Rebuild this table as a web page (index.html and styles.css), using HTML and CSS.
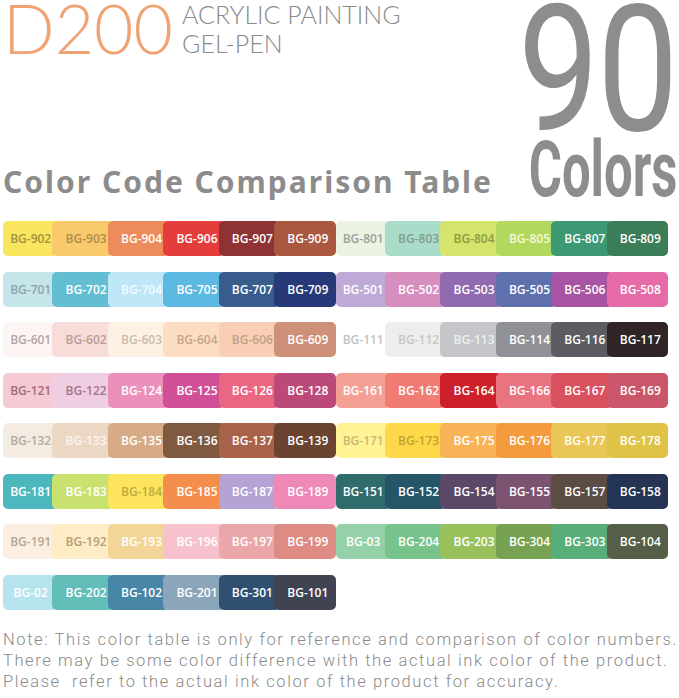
FILE: index.html
```html
<!DOCTYPE html>
<html>
<head>
<meta charset="utf-8">
<link rel="stylesheet" href="styles.css">
</head>
<body>
<div class="page">
  <header class="top">
    <div class="left">
      <div class="brand">
        <span class="model">D200</span>
        <div class="sub"><span>ACRYLIC PAINTING</span><span>GEL-PEN</span></div>
      </div>
      <h1 class="title">Color Code Comparison Table</h1>
    </div>
    <div class="right">
      <div class="num">90</div>
      <div class="colors">Colors</div>
    </div>
  </header>

  <section class="table">
    <div class="row">
      <div class="grp">
        <div class="sw dk" style="background:#f9e55e;color:#a4933e">BG-902</div>
        <div class="sw dk" style="background:#f8ca6c;color:#ad8d4c">BG-903</div>
        <div class="sw" style="background:#ee8b5a">BG-904</div>
        <div class="sw" style="background:#e53d3b">BG-906</div>
        <div class="sw" style="background:#8e3233">BG-907</div>
        <div class="sw" style="background:#aa5840">BG-909</div>
      </div>
      <div class="grp">
        <div class="sw dk" style="background:#ebf3e3;color:#9aa39a">BG-801</div>
        <div class="sw dk" style="background:#aadcca;color:#7f9f8f">BG-803</div>
        <div class="sw dk" style="background:#d4e46c;color:#8e9b42">BG-804</div>
        <div class="sw" style="background:#b2d95d;color:#f4f8d8">BG-805</div>
        <div class="sw" style="background:#3d9974">BG-807</div>
        <div class="sw" style="background:#3b7d57">BG-809</div>
      </div>
    </div>
    <div class="row">
      <div class="grp">
        <div class="sw dk" style="background:#c5e5eb;color:#8ea4a8">BG-701</div>
        <div class="sw" style="background:#63bed1">BG-702</div>
        <div class="sw" style="background:#bee7f8;color:#f4fbff">BG-704</div>
        <div class="sw" style="background:#5bb9e2">BG-705</div>
        <div class="sw" style="background:#385d8d">BG-707</div>
        <div class="sw" style="background:#273978">BG-709</div>
      </div>
      <div class="grp">
        <div class="sw" style="background:#bfa9d7">BG-501</div>
        <div class="sw" style="background:#d58ebe">BG-502</div>
        <div class="sw" style="background:#906baf">BG-503</div>
        <div class="sw" style="background:#606fad">BG-505</div>
        <div class="sw" style="background:#a853a3">BG-506</div>
        <div class="sw" style="background:#e66ca8">BG-508</div>
      </div>
    </div>
    <div class="row">
      <div class="grp">
        <div class="sw dk" style="background:#fdf4f4;color:#b3a6a6">BG-601</div>
        <div class="sw dk" style="background:#f8dcd9;color:#b89f9c">BG-602</div>
        <div class="sw dk" style="background:#fdf1e3;color:#cbbcab">BG-603</div>
        <div class="sw dk" style="background:#fcddc1;color:#c5a68a">BG-604</div>
        <div class="sw dk" style="background:#f8cfb5;color:#c59f86">BG-606</div>
        <div class="sw" style="background:#ce9078">BG-609</div>
      </div>
      <div class="grp">
        <div class="sw dk" style="background:#ffffff;color:#c2c2c2">BG-111</div>
        <div class="sw dk" style="background:#ededed;color:#c6c6c6">BG-112</div>
        <div class="sw" style="background:#c4c6c9;color:#eceef0">BG-113</div>
        <div class="sw" style="background:#8f9197">BG-114</div>
        <div class="sw" style="background:#5b5d62">BG-116</div>
        <div class="sw" style="background:#2f2527">BG-117</div>
      </div>
    </div>
    <div class="row">
      <div class="grp">
        <div class="sw dk" style="background:#f5cad3;color:#a56a7a">BG-121</div>
        <div class="sw dk" style="background:#f0cee1;color:#a37390">BG-122</div>
        <div class="sw" style="background:#eb90ba">BG-124</div>
        <div class="sw" style="background:#d14f97">BG-125</div>
        <div class="sw" style="background:#e96780">BG-126</div>
        <div class="sw" style="background:#bc4a79">BG-128</div>
      </div>
      <div class="grp">
        <div class="sw" style="background:#f4a095">BG-161</div>
        <div class="sw" style="background:#f07c73">BG-162</div>
        <div class="sw" style="background:#cd202a">BG-164</div>
        <div class="sw" style="background:#e97480">BG-166</div>
        <div class="sw" style="background:#d9505f">BG-167</div>
        <div class="sw" style="background:#c95669">BG-169</div>
      </div>
    </div>
    <div class="row">
      <div class="grp">
        <div class="sw dk" style="background:#f4ece2;color:#b3aba2">BG-132</div>
        <div class="sw" style="background:#ecd7c5;color:#fbf4ee">BG-133</div>
        <div class="sw" style="background:#d8ab87">BG-135</div>
        <div class="sw" style="background:#805941">BG-136</div>
        <div class="sw" style="background:#a9624a">BG-137</div>
        <div class="sw" style="background:#6b4431">BG-139</div>
      </div>
      <div class="grp">
        <div class="sw dk" style="background:#fff394;color:#c9ba72">BG-171</div>
        <div class="sw dk" style="background:#fdd849;color:#c2a232">BG-173</div>
        <div class="sw" style="background:#f7b356">BG-175</div>
        <div class="sw" style="background:#f49b3e">BG-176</div>
        <div class="sw" style="background:#e9c655">BG-177</div>
        <div class="sw" style="background:#dec346">BG-178</div>
      </div>
    </div>
    <div class="row">
      <div class="grp">
        <div class="sw" style="background:#4cb8bd">BG-181</div>
        <div class="sw" style="background:#c9e16f">BG-183</div>
        <div class="sw dk" style="background:#fce55d;color:#c2aa42">BG-184</div>
        <div class="sw" style="background:#f58d4d">BG-185</div>
        <div class="sw" style="background:#b5a3d5">BG-187</div>
        <div class="sw" style="background:#ee89b7">BG-189</div>
      </div>
      <div class="grp">
        <div class="sw" style="background:#2f6c6b">BG-151</div>
        <div class="sw" style="background:#245667">BG-152</div>
        <div class="sw" style="background:#5b4768">BG-154</div>
        <div class="sw" style="background:#7b5371">BG-155</div>
        <div class="sw" style="background:#5b4d44">BG-157</div>
        <div class="sw" style="background:#233454">BG-158</div>
      </div>
    </div>
    <div class="row">
      <div class="grp">
        <div class="sw dk" style="background:#fcefe1;color:#b5a595">BG-191</div>
        <div class="sw dk" style="background:#fdecc5;color:#b59f75">BG-192</div>
        <div class="sw" style="background:#f3d597">BG-193</div>
        <div class="sw" style="background:#f8c1ce">BG-196</div>
        <div class="sw" style="background:#eaa6a8">BG-197</div>
        <div class="sw" style="background:#de8b83">BG-199</div>
      </div>
      <div class="grp">
        <div class="sw" style="background:#94d1a9">BG-03</div>
        <div class="sw" style="background:#78c28b">BG-204</div>
        <div class="sw" style="background:#99c15b">BG-203</div>
        <div class="sw" style="background:#77a251">BG-304</div>
        <div class="sw" style="background:#58ae79">BG-303</div>
        <div class="sw" style="background:#555e46">BG-104</div>
      </div>
    </div>
    <div class="row">
      <div class="grp">
        <div class="sw" style="background:#b7e3ef">BG-02</div>
        <div class="sw" style="background:#63beb9">BG-202</div>
        <div class="sw" style="background:#4786a7">BG-102</div>
        <div class="sw" style="background:#8ba6bb">BG-201</div>
        <div class="sw" style="background:#304f71">BG-301</div>
        <div class="sw" style="background:#404351">BG-101</div>
      </div>
      <div class="grp"></div>
    </div>
  </section>

  <p class="note">Note: This color table is only for reference and comparison of color numbers.<br>There may be some color difference with the actual ink color of the product.<br>Please&nbsp; refer to the actual ink color of the product for accuracy.</p>
</div>
</body>
</html>
```

FILE: styles.css
```css
* { box-sizing: border-box; }
html, body { margin: 0; padding: 0; background: #ffffff; }
.page {
  width: 679px;
  padding: 0 11px 0 3px;
  font-family: "Noto Sans", "DejaVu Sans", sans-serif;
}
.top {
  display: flex;
  justify-content: space-between;
  height: 221px;
}
.left {
  display: flex;
  flex-direction: column;
  flex: 1 1 auto;
  min-width: 0;
}
.brand {
  display: flex;
  align-items: flex-start;
  gap: 9px;
}
.model {
  font-family: "Lato", sans-serif;
  font-weight: 300;
  font-size: 68px;
  line-height: 56px;
  color: #f0a272;
}
.sub {
  display: flex;
  flex-direction: column;
  font-family: "Lato", sans-serif;
  font-weight: 300;
  font-size: 25px;
  line-height: 29px;
  color: #8a8a8a;
  letter-spacing: 0;
}
.title {
  margin: 105px 0 0 0;
  font-family: "Noto Sans", sans-serif;
  font-weight: 700;
  font-size: 30px;
  line-height: 38px;
  letter-spacing: 2px;
  color: #8c8c8c;
  white-space: nowrap;
}
.right {
  display: flex;
  flex-direction: column;
  align-items: flex-end;
  margin-right: -9px;
  flex: 0 0 auto;
}
.num {
  font-family: "Roboto", sans-serif;
  font-weight: 400;
  font-size: 176px;
  line-height: 140px;
  color: #8d8d8d;
  transform: scaleX(0.82);
  transform-origin: right top;
  letter-spacing: -2px;
}
.colors {
  font-family: "Roboto", sans-serif;
  font-weight: 700;
  font-size: 77px;
  line-height: 60px;
  color: #8d8d8d;
  transform: scaleX(0.66);
  transform-origin: right top;
}
.table {
  display: flex;
  flex-direction: column;
  gap: 15.5px;
  width: 665px;
}
.row {
  display: grid;
  grid-template-columns: 1fr 1fr;
  height: 35px;
}
.grp {
  display: flex;
}
.sw {
  flex: 1 1 0;
  display: flex;
  align-items: center;
  justify-content: center;
  border-radius: 5px;
  color: #ffffff;
  font-family: "Open Sans", sans-serif;
  font-weight: 600;
  font-size: 12px;
  letter-spacing: 0;
  white-space: nowrap;
}
.sw + .sw {
  margin-left: -6px;
  padding-left: 6px;
  flex-basis: 6px;
}
.note {
  margin: 19px 0 0 0;
  font-family: "Roboto", sans-serif;
  font-weight: 300;
  font-size: 16.5px;
  line-height: 21px;
  letter-spacing: 1.6px;
  color: #8a8a8a;
  white-space: nowrap;
}
```
